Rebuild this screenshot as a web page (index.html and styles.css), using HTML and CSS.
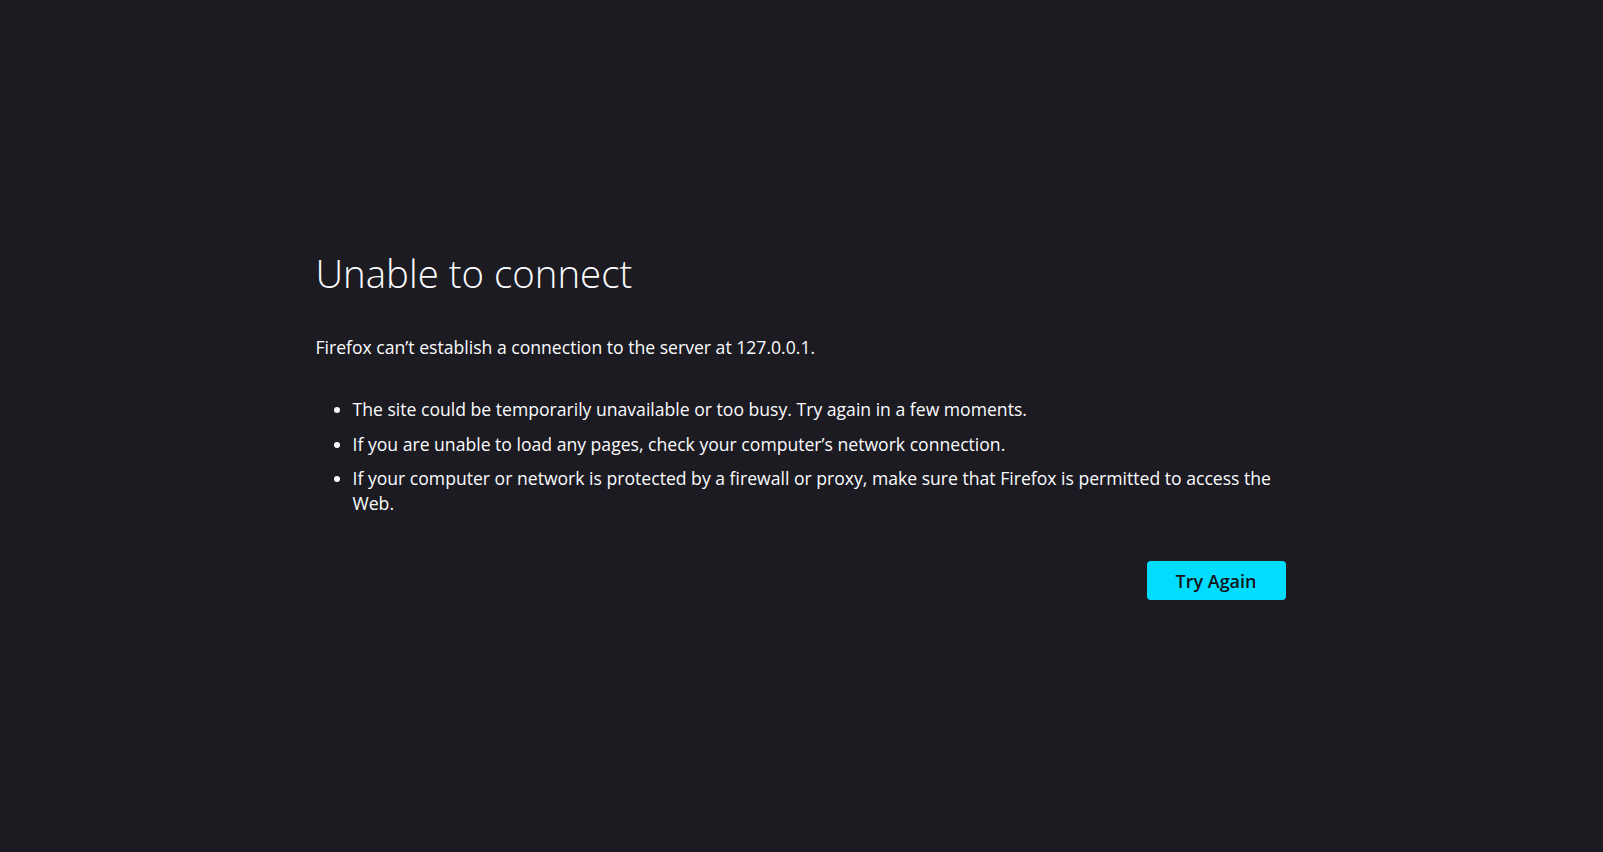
FILE: index.html
```html
<!DOCTYPE html>
<html lang="en">
<head>
<meta charset="utf-8">
<title>Problem loading page</title>
<link rel="stylesheet" href="styles.css">
</head>
<body>
<main class="container">
  <h1 class="title">Unable to connect</h1>
  <p class="intro">Firefox can’t establish a connection to the server at 127.0.0.1.</p>
  <ul class="reasons">
    <li>The site could be temporarily unavailable or too busy. Try again in a few moments.</li>
    <li>If you are unable to load any pages, check your computer’s network connection.</li>
    <li>If your computer or network is protected by a firewall or proxy, make sure that Firefox is permitted to access the Web.</li>
  </ul>
  <div class="actions">
    <button class="primary" type="button">Try Again</button>
  </div>
</main>
</body>
</html>
```

FILE: styles.css
```css
html, body {
  margin: 0;
  padding: 0;
  height: 100%;
}
body {
  background: #1c1b22;
  color: #fbfbfe;
  font-family: "Open Sans", "Noto Sans", sans-serif;
  font-size: 17.6px;
}
.container {
  width: 970px;
  margin: 0 auto;
  padding-top: 250px;
  transform: translateX(-1px);
}
.title {
  margin: 0;
  font-size: 38.4px;
  font-weight: 300;
  line-height: 47px;
}
.intro {
  margin: 38px 0 0;
  line-height: 25px;
}
.reasons {
  margin: 37px 0 0;
  padding-left: 37px;
}
.reasons li {
  line-height: 25px;
  margin-bottom: 9.5px;
}
.reasons li:last-child {
  margin-bottom: 0;
}
.actions {
  display: flex;
  justify-content: flex-end;
  margin-top: 45px;
}
.primary {
  width: 139px;
  height: 39px;
  border: none;
  border-radius: 4px;
  background: #00ddff;
  color: #15141a;
  font-family: inherit;
  font-size: 18px;
  font-weight: 600;
  padding: 0;
}
```
